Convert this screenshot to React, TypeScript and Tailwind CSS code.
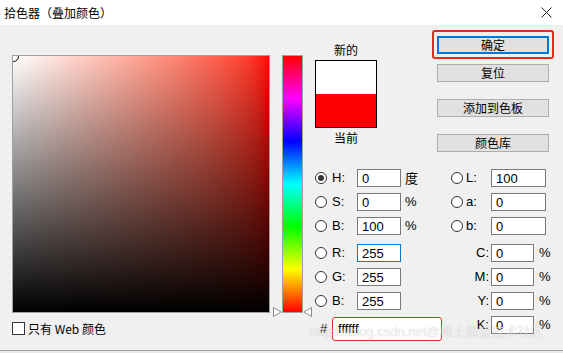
import React from "react";

const sans = "font-['Liberation_Sans','Noto_Sans_CJK_SC',sans-serif]";
const cjk = "font-['Noto_Sans_CJK_SC',sans-serif]";

function Radio({ checked }: { checked?: boolean }) {
  return (
    <span className="w-[12px] h-[12px] rounded-full border border-[#333] bg-white flex items-center justify-center shrink-0">
      {checked && <span className="w-[6px] h-[6px] rounded-full bg-[#333]" />}
    </span>
  );
}

function Field({
  value,
  w,
  focus,
}: {
  value: string;
  w: string;
  focus?: boolean;
}) {
  return (
    <span
      className={`${w} h-[18px] bg-white border ${
        focus ? "border-[#0078d7]" : "border-[#7a7a7a]"
      } flex items-center pl-[4px] text-[13px] leading-none text-black`}
    >
      {value}
    </span>
  );
}

function LeftRow({
  label,
  value,
  unit,
  checked,
  focus,
}: {
  label: string;
  value: string;
  unit?: string;
  checked?: boolean;
  focus?: boolean;
}) {
  return (
    <div className="flex items-center h-[18px]">
      <Radio checked={checked} />
      <span className="ml-[5px] w-[25px] text-[13px]">{label}</span>
      <Field value={value} w="w-[44px]" focus={focus} />
      {unit && <span className={`ml-[4px] text-[13px] ${unit === "度" ? cjk : ""}`}>{unit}</span>}
    </div>
  );
}

function LabRow({ label, value }: { label: string; value: string }) {
  return (
    <div className="flex items-center h-[18px]">
      <Radio />
      <span className="ml-[3px] w-[25px] text-[13px]">{label}</span>
      <Field value={value} w="w-[55px]" />
    </div>
  );
}

function CmykRow({ label, value }: { label: string; value: string }) {
  return (
    <div className="flex items-center h-[18px]">
      <span className="w-[40px] pr-[2px] text-right text-[13px]">{label}</span>
      <Field value={value} w="w-[43px]" />
      <span className="ml-[5px] text-[13px]">%</span>
    </div>
  );
}

function Button({ children, focus }: { children: React.ReactNode; focus?: boolean }) {
  return (
    <div
      className={`w-[112px] h-[18px] bg-[#e1e1e1] flex items-center justify-center text-[12px] leading-none ${
        focus ? "border-2 border-[#0078d7]" : "border border-[#adadad]"
      }`}
    >
      {children}
    </div>
  );
}

function Arrow({ dir }: { dir: "left" | "right" }) {
  return (
    <svg width="9" height="10" viewBox="0 0 9 10">
      {dir === "right" ? (
        <path d="M0.5 0.5 L8 5 L0.5 9.5 Z" fill="#fff" stroke="#8a8a8a" />
      ) : (
        <path d="M8.5 0.5 L1 5 L8.5 9.5 Z" fill="#fff" stroke="#8a8a8a" />
      )}
    </svg>
  );
}

export default function App() {
  return (
    <div className={`w-[563px] h-[353px] bg-[#e9e9e9] overflow-hidden text-black ${sans}`}>
      <div className="h-[351px] flex flex-col bg-[#f0f0f0] border-b border-[#a0a0a0] relative">
        <div className="h-[25px] bg-white flex items-center justify-between pl-[4px] pr-[11px]">
          <span className={`text-[12px] ${cjk}`}>拾色器（叠加颜色）</span>
          <svg width="11" height="11" viewBox="0 0 11 11">
            <path d="M0.5 0.5 L10.5 10.5 M10.5 0.5 L0.5 10.5" stroke="#222" strokeWidth="1" />
          </svg>
        </div>

        <div className="flex-1 flex">
          <div className="pl-[12px] pt-[30px] flex flex-col">
            <div className="w-[258px] h-[258px] border border-[#a0a0a0] relative overflow-hidden bg-linear-to-r from-white to-[#ff0000]">
              <div className="absolute inset-0 bg-linear-to-b from-transparent to-black" />
              <div className="absolute -left-[5px] -top-[5px] w-[11px] h-[11px] rounded-full border border-black" />
            </div>
            <div className="mt-[9px] flex items-center h-[13px]">
              <span className="w-[13px] h-[13px] border border-[#333] bg-white" />
              <span className={`ml-[3px] text-[12px] ${cjk}`}>只有 Web 颜色</span>
            </div>
          </div>

          <div className="ml-[12px] pt-[30px]">
            <div className="relative w-[21px] h-[258px] border border-[#a0a0a0] bg-[linear-gradient(to_bottom,#f00,#f0f,#00f,#0ff,#0f0,#ff0,#f00)]">
              <span className="absolute -left-[10px] -bottom-[5px] flex">
                <Arrow dir="right" />
              </span>
              <span className="absolute -right-[10px] -bottom-[5px] flex">
                <Arrow dir="left" />
              </span>
            </div>
          </div>

          <div className="ml-[12px] w-[238px] flex flex-col">
            <div className="h-[144px] flex">
              <div className={`w-[62px] pt-[17px] flex flex-col items-center ${cjk}`}>
                <span className="h-[16px] leading-[16px] text-[12px]">新的</span>
                <div className="mt-[2px] w-[62px] h-[68px] border border-black flex flex-col">
                  <div className="flex-1 bg-white" />
                  <div className="flex-1 bg-[#ff0000]" />
                </div>
                <span className="mt-[2px] h-[16px] leading-[16px] text-[12px]">当前</span>
              </div>
              <div className={`ml-[60px] pt-[11px] flex flex-col ${cjk}`}>
                <div className="relative">
                  <Button focus>确定</Button>
                  <div className="absolute -left-[5px] -right-[5px] -top-[6px] -bottom-[5px] border-2 border-[#e8281e] rounded-[3px]" />
                </div>
                <div className="mt-[10px]">
                  <Button>复位</Button>
                </div>
                <div className="mt-[17px]">
                  <Button>添加到色板</Button>
                </div>
                <div className="mt-[17px]">
                  <Button>颜色库</Button>
                </div>
              </div>
            </div>

            <div className="flex">
              <div className="w-[136px] flex flex-col">
                <div className="flex flex-col gap-[6px]">
                  <LeftRow label="H:" value="0" unit="度" checked />
                  <LeftRow label="S:" value="0" unit="%" />
                  <LeftRow label="B:" value="100" unit="%" />
                </div>
                <div className="mt-[9px] flex flex-col gap-[6px]">
                  <LeftRow label="R:" value="255" focus />
                  <LeftRow label="G:" value="255" />
                  <LeftRow label="B:" value="255" />
                </div>
                <div className="mt-[7px] flex items-center h-[24px]">
                  <span className="ml-[5px] w-[12px] text-[13px]">#</span>
                  <span className="w-[110px] h-[24px] border-[1.5px] border-[#e02a20] rounded-[3px] bg-white flex items-center pl-[5px] text-[13px]">
                    ffffff
                  </span>
                </div>
              </div>
              <div className="flex flex-col">
                <div className="flex flex-col gap-[6px]">
                  <LabRow label="L:" value="100" />
                  <LabRow label="a:" value="0" />
                  <LabRow label="b:" value="0" />
                </div>
                <div className="mt-[9px] flex flex-col gap-[6px]">
                  <CmykRow label="C:" value="0" />
                  <CmykRow label="M:" value="0" />
                  <CmykRow label="Y:" value="0" />
                  <CmykRow label="K:" value="0" />
                </div>
              </div>
            </div>
          </div>
        </div>

        <span className="absolute left-[310px] top-[324px] text-[13px] leading-[16px] text-white/60 [text-shadow:0_0_1px_rgba(0,0,0,0.2)] pointer-events-none whitespace-nowrap">
          https://blog.csdn.net@稀土掘金技术社区
        </span>
      </div>
    </div>
  );
}
